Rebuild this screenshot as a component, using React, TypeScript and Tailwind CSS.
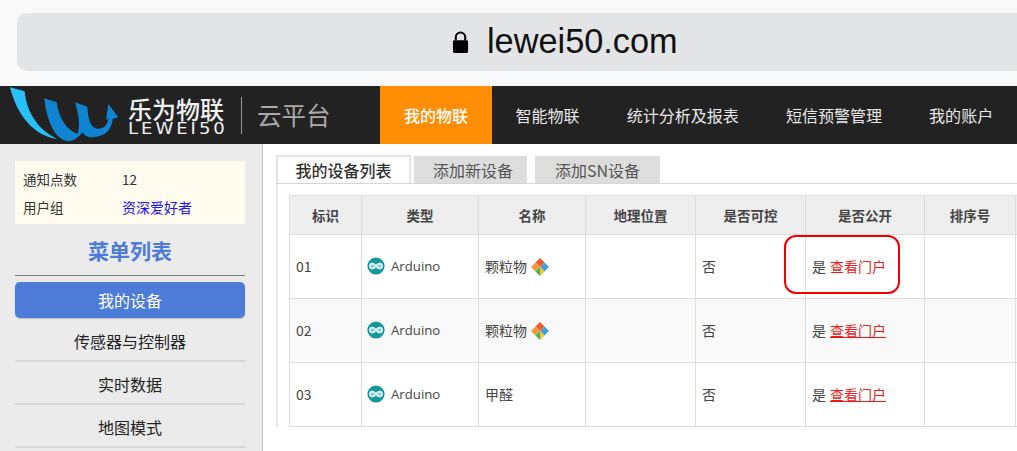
import React from "react";

const cjk = { fontFamily: '"Noto Sans CJK SC", "Liberation Sans", sans-serif' };

function Logo() {
  return (
    <svg width="120" height="58" viewBox="0 0 360 174" className="shrink-0">
      <path d="M30 4 L74 16 C80 85 120 135 172 159 C100 150 50 85 30 4 Z" fill="#27c0f8" />
      <path
        d="M133 37 L170 49 C176 95 198 130 232 144 C242 120 236 85 225 49 L262 62 C264 100 272 125 292 128 C310 130 322 118 325 96 L318 102 L325 54 L355 94 L338 99 C335 130 318 150 280 154 C265 156 255 150 247 139 C232 162 208 172 190 162 C158 148 138 90 133 37 Z"
        fill="#0f84d0"
      />
    </svg>
  );
}

function ArduinoIcon() {
  return (
    <svg width="18" height="18" viewBox="0 0 18 18" className="shrink-0 -ml-[1px]">
      <circle cx="9" cy="9" r="8.6" fill="#14979c" />
      <path
        d="M9 9 C7.8 7 6.6 6.4 5.4 6.4 A2.6 2.6 0 0 0 5.4 11.6 C6.6 11.6 7.8 11 9 9 C10.2 7 11.4 6.4 12.6 6.4 A2.6 2.6 0 0 1 12.6 11.6 C11.4 11.6 10.2 11 9 9 Z"
        fill="#8fd3d3"
        stroke="#e4f6f6"
        strokeWidth="1.5"
      />
    </svg>
  );
}

function Diamond() {
  return (
    <svg width="18" height="18" viewBox="0 0 18 18" className="shrink-0">
      <path d="M9 0 L13.5 4.5 L9 9 L4.5 4.5 Z" fill="#ef5a32" />
      <path d="M4.5 4.5 L9 9 L4.5 13.5 L0 9 Z" fill="#f29a3a" />
      <path d="M13.5 4.5 L18 9 L13.5 13.5 L9 9 Z" fill="#3f9fe0" />
      <path d="M9 9 L13.5 13.5 L9 18 Z" fill="#f2c230" />
      <path d="M9 9 L4.5 13.5 L9 18 Z" fill="#4cb050" />
    </svg>
  );
}

const rows = [
  { id: "01", name: "颗粒物", icon: true, underline: false, bg: "bg-white" },
  { id: "02", name: "颗粒物", icon: true, underline: true, bg: "bg-[#f9f9f9]" },
  { id: "03", name: "甲醛", icon: false, underline: true, bg: "bg-white" },
];

const heads = ["标识", "类型", "名称", "地理位置", "是否可控", "是否公开", "排序号", ""];
const td = "border border-[#dddddd] px-[6px] align-middle h-[64px] text-[14px] text-[#444444]";

export default function App() {
  return (
    <div className="w-[1017px] h-[451px] overflow-hidden bg-white flex flex-col" style={cjk}>
      <div className="h-[86px] shrink-0 bg-[#f9f9f9] pl-[17px] pt-[13px]">
        <div className="h-[58px] bg-[#e3e4e6] rounded-l-[10px] flex items-center pl-[435px] gap-[18px] pb-[2px]">
          <svg width="17" height="23" viewBox="0 0 18 24" className="shrink-0 mt-[2px]">
            <path d="M4 10 V6.5 A5 5 0 0 1 14 6.5 V10" fill="none" stroke="#000" strokeWidth="2.2" />
            <rect x="1" y="9.5" width="16" height="13.5" rx="1.5" fill="#000" />
          </svg>
          <span className="text-[34.3px] leading-none text-[#111111]" style={{ fontFamily: '"Liberation Sans", sans-serif' }}>
            lewei50.com
          </span>
        </div>
      </div>

      <div className="h-[58px] shrink-0 bg-[#222222] flex">
        <div className="w-[380px] shrink-0 flex items-center">
          <Logo />
          <div className="ml-[8px] w-[100px] pt-[4px] flex flex-col text-[#f2f2f2]">
            <span className="text-[24px] leading-[24px] font-medium whitespace-nowrap">乐为物联</span>
            <span
              className="mt-[1px] text-[15px] leading-[15px] whitespace-nowrap tracking-[2.5px] scale-x-[1.2] origin-left"
              style={{ fontFamily: '"DejaVu Sans", sans-serif' }}
            >
              LEWEI50
            </span>
          </div>
          <div className="ml-[13px] w-px h-[37px] bg-[#999999]" />
          <span className="ml-[15px] text-[24.5px] text-[#aaaaaa] whitespace-nowrap">云平台</span>
        </div>
        <div className="w-[112px] shrink-0 bg-[#ff8e04] flex items-center justify-center text-[16px] text-white font-medium">
          我的物联
        </div>
        {["智能物联", "统计分析及报表", "短信预警管理", "我的账户"].map((t) => (
          <div key={t} className="px-[23.5px] flex items-center text-[16.05px] text-[#e8e8e8] whitespace-nowrap">
            {t}
          </div>
        ))}
      </div>

      <div className="flex flex-1 min-h-0">
        <aside className="w-[263px] shrink-0 bg-[#ebebeb] border-r border-[#c8c8c8] pl-[15px] pr-[17px] pt-[17px]">
          <div className="h-[63px] bg-[#fffbef] pl-[8px] pt-[4px] text-[13.5px] text-[#333333]">
            <div className="flex h-[28px] items-center">
              <span className="w-[99px]">通知点数</span>
              <span>12</span>
            </div>
            <div className="flex h-[28px] items-center">
              <span className="w-[99px]">用户组</span>
              <span className="text-[#1a14f0] text-[14px]">资深爱好者</span>
            </div>
          </div>
          <div className="h-[52px] border-b border-[#777777] pt-[3px] flex items-center justify-center text-[21px] font-bold text-[#4d7cd8]">
            菜单列表
          </div>
          <div className="mt-[6px] h-[36px] rounded-[5px] bg-[#4d7cd8] shadow-[0_1px_1px_#bbbbbb] flex items-center justify-center text-[16px] text-white">
            我的设备
          </div>
          {["传感器与控制器", "实时数据", "地图模式"].map((t, i) => (
            <div
              key={t}
              className={`${i === 0 ? "h-[44px] pt-[4px]" : "h-[43px] pt-[3px]"} border-b-2 border-[#d8d8d8] flex items-center justify-center text-[16px] text-[#222222]`}
            >
              {t}
            </div>
          ))}
        </aside>

        <main className="relative flex-1 min-w-0 overflow-hidden pl-[13px] pt-[12px]">
          <div className="flex h-[28px] border-b border-[#d5d5d5] items-end">
            <div className="w-[135px] h-[28px] bg-white border-2 border-b-0 border-[#e4e4e4] flex items-center justify-center text-[16px] font-medium text-[#333333]">
              我的设备列表
            </div>
            <div className="ml-[3px] w-[113px] h-[27px] bg-[#dddddd] pl-[5px] flex items-center justify-center text-[16px] text-[#555555]">
              添加新设备
            </div>
            <div className="ml-[8px] w-[125px] h-[27px] bg-[#dddddd] flex items-center justify-center text-[16px] text-[#555555]">
              添加SN设备
            </div>
          </div>
          <div className="border-l-2 border-[#e8e8e8] pl-[11px] pt-[11px]">
            <table className="table-fixed border-collapse w-[826px]">
              <colgroup>
                <col className="w-[72px]" />
                <col className="w-[117px]" />
                <col className="w-[107px]" />
                <col className="w-[110px]" />
                <col className="w-[110px]" />
                <col className="w-[119px]" />
                <col className="w-[91px]" />
                <col className="w-[100px]" />
              </colgroup>
              <thead>
                <tr className="bg-[#eeeeee]">
                  {heads.map((h, i) => (
                    <th key={i} className="border border-[#dddddd] h-[39px] text-[13.5px] font-bold text-[#444444] text-center">
                      {h}
                    </th>
                  ))}
                </tr>
              </thead>
              <tbody>
                {rows.map((r) => (
                  <tr key={r.id} className={r.bg}>
                    <td className={td}>{r.id}</td>
                    <td className={td}>
                      <div className="flex items-center gap-[6px]">
                        <ArduinoIcon />
                        <span className="text-[13.2px]" style={{ fontFamily: '"Open Sans", sans-serif' }}>Arduino</span>
                      </div>
                    </td>
                    <td className={td}>
                      <div className="flex items-center gap-[4px]">
                        <span>{r.name}</span>
                        {r.icon && <Diamond />}
                      </div>
                    </td>
                    <td className={td} />
                    <td className={td}>否</td>
                    <td className={td}>
                      是<span className={`ml-[4px] text-[#f01a1a] ${r.underline ? "underline" : ""}`}>查看门户</span>
                    </td>
                    <td className={td} />
                    <td className={td} />
                  </tr>
                ))}
              </tbody>
            </table>
          </div>
          <div className="absolute left-[521px] top-[91px] w-[116px] h-[59px] rounded-[12px] border-2 border-[#f00000]" />
        </main>
      </div>
    </div>
  );
}
